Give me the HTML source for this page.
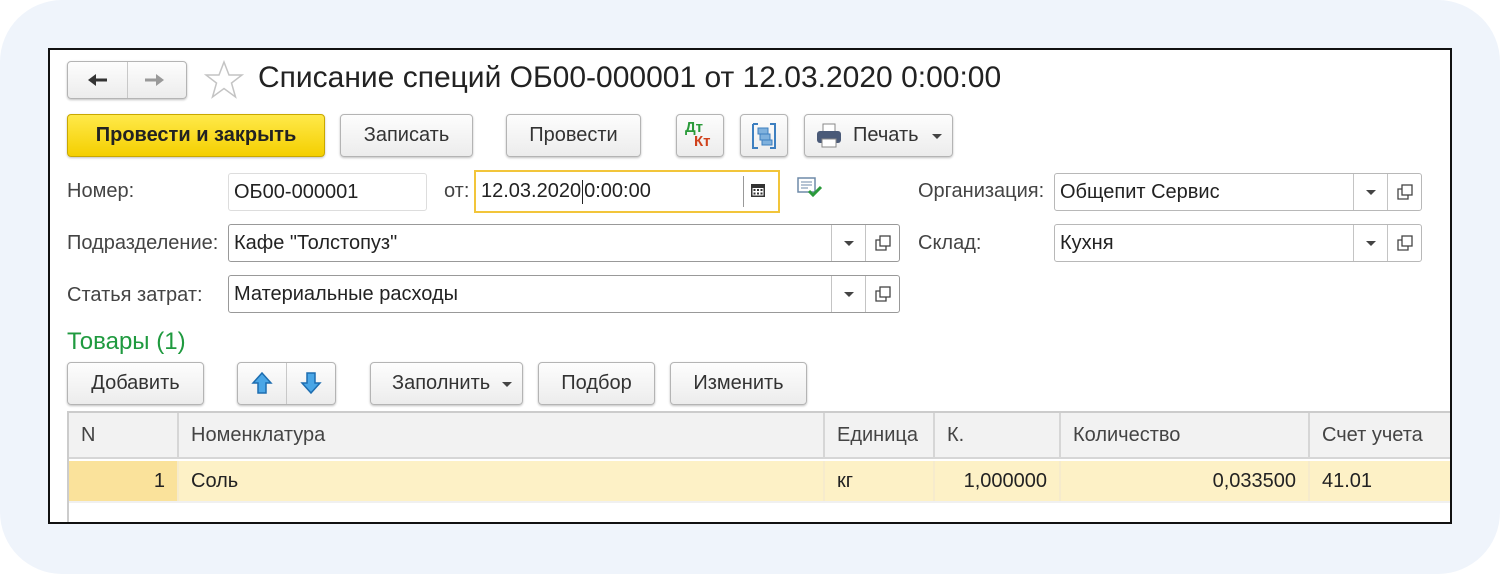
<!DOCTYPE html>
<html><head><meta charset="utf-8"><style>
*{box-sizing:border-box;margin:0;padding:0}
body{width:1500px;height:574px;background:#fff;font-family:"Liberation Sans",sans-serif;position:relative;overflow:hidden;color:#333}
.bg{position:absolute;left:0;top:0;width:1500px;height:574px;background:#eff4fb;border-radius:62px}
.panel{position:absolute;left:48px;top:48px;width:1404px;height:476px;background:#fff;border:2px solid #111;overflow:hidden}
.a{position:absolute}
.btn{position:absolute;border:1px solid #b4b4b4;border-radius:4px;background:linear-gradient(#fdfdfd,#ececec);box-shadow:0 1px 2px rgba(0,0,0,.25);font-size:20px;color:#333;display:flex;align-items:center;justify-content:center}
.lbl{position:absolute;font-size:20px;color:#444}
.fld{position:absolute;border:1px solid #b8b8b8;border-radius:3px;background:#fff;font-size:20px;color:#222;padding-left:5px;display:flex;align-items:center}
.dd{position:absolute;top:0;bottom:0;border-left:1px solid #c4c4c4}
.tri{position:absolute;width:0;height:0;border-left:5px solid transparent;border-right:5px solid transparent;border-top:5px solid #444}
.th{position:absolute;top:0;height:46px;background:#f2f2f2;border-right:2px solid #d6d6d6;border-bottom:2px solid #d6d6d6;font-size:20px;color:#444;padding-left:12px;display:flex;align-items:center}
.td{position:absolute;top:48px;height:40px;background:#fdf1c6;border-right:2px solid #f6ebcc;font-size:20px;color:#222;display:flex;align-items:center;padding:0 12px}
</style></head><body>
<div class="bg"></div>
<div class="panel">
<div style="position:absolute;left:-50px;top:-50px;width:1500px;height:574px">
<!-- nav -->
<div class="btn" style="left:67px;top:61px;width:120px;height:38px"></div>
<div class="a" style="left:127px;top:62px;width:1px;height:36px;background:#c8c8c8"></div>
<svg class="a" style="left:87px;top:72px" width="22" height="16"><path d="M3 8H20" stroke="#333" stroke-width="3"/><path d="M1 8L9 2V14Z" fill="#333"/></svg>
<svg class="a" style="left:143px;top:72px" width="22" height="16"><path d="M2 8H19" stroke="#999" stroke-width="3"/><path d="M21 8L13 2V14Z" fill="#999"/></svg>
<svg class="a" style="left:204px;top:60px" width="40" height="40"><path d="M20 2L25 15H38L27.5 23L31.5 37L20 28.5L8.5 37L12.5 23L2 15H15Z" fill="none" stroke="#c4c4c4" stroke-width="1.5"/></svg>
<div class="a" style="left:258px;top:61px;font-size:30px;color:#222">Списание специй ОБ00-000001 от 12.03.2020 0:00:00</div>
<!-- toolbar -->
<div class="btn" style="left:67px;top:114px;width:258px;height:43px;background:linear-gradient(#ffe94a,#f4cf00);border-color:#c9a800;font-weight:bold;color:#222">Провести и закрыть</div>
<div class="btn" style="left:340px;top:114px;width:133px;height:43px">Записать</div>
<div class="btn" style="left:506px;top:114px;width:135px;height:43px">Провести</div>
<div class="btn" style="left:676px;top:114px;width:48px;height:43px"></div>
<div class="a" style="left:685px;top:119px;font-size:15px;font-weight:bold;color:#2a9a3a">Дт</div>
<div class="a" style="left:694px;top:133px;font-size:15px;font-weight:bold;color:#d0421c">Кт</div>
<div class="btn" style="left:740px;top:114px;width:48px;height:43px"></div>
<svg class="a" style="left:750px;top:122px" width="28" height="28"><path d="M3 2H8M3 2V26H8M20 2H25V26H20" stroke="#3d7fc0" stroke-width="2" fill="none"/><rect x="8" y="6" width="10" height="6" fill="#7fb1dd" stroke="#3d7fc0"/><rect x="10" y="12" width="10" height="6" fill="#7fb1dd" stroke="#3d7fc0"/><rect x="12" y="18" width="10" height="5" fill="#7fb1dd" stroke="#3d7fc0"/></svg>
<div class="btn" style="left:804px;top:114px;width:149px;height:43px;justify-content:flex-start;padding-left:48px">Печать</div>
<svg class="a" style="left:815px;top:123px" width="28" height="26"><rect x="8" y="1" width="12" height="8" fill="#fff" stroke="#888"/><rect x="2" y="8" width="24" height="12" rx="3" fill="#4a5a78"/><rect x="7" y="16" width="14" height="8" fill="#fff" stroke="#888"/></svg>
<div class="tri" style="left:932px;top:134px"></div>
<!-- row1 -->
<div class="lbl" style="left:67px;top:180px">Номер:</div>
<div class="fld" style="left:228px;top:173px;width:199px;height:38px;border-color:#ddd">ОБ00-000001</div>
<div class="lbl" style="left:444px;top:180px">от:</div>
<div class="fld" style="left:474px;top:170px;width:306px;height:43px;border:2px solid #f2c53a;border-radius:0">12.03.2020<span style="display:inline-block;width:1px;height:24px;background:#222;margin:0 1px"></span>0:00:00<div class="dd" style="left:267px;top:4px;bottom:4px;border-color:#999"></div></div>
<svg class="a" style="left:750px;top:182px" width="16" height="16"><rect x="1" y="2" width="14" height="13" fill="#333"/><rect x="2.5" y="6" width="11" height="7.5" fill="#fff"/><g fill="#333"><rect x="3.5" y="7" width="2" height="2"/><rect x="7" y="7" width="2" height="2"/><rect x="10.5" y="7" width="2" height="2"/><rect x="3.5" y="10.5" width="2" height="2"/><rect x="7" y="10.5" width="2" height="2"/><rect x="10.5" y="10.5" width="2" height="2"/></g></svg>
<svg class="a" style="left:796px;top:176px" width="28" height="24"><rect x="2" y="2" width="17" height="14" fill="#fff" stroke="#6e8aa8" stroke-width="1.5"/><path d="M5 6H16M5 9H16M5 12H12" stroke="#6e8aa8"/><path d="M13 15L17 19L25 11" stroke="#2a9a3a" stroke-width="3" fill="none"/></svg>
<div class="lbl" style="left:918px;top:180px">Организация:</div>
<div class="fld" style="left:1054px;top:173px;width:368px;height:38px">Общепит Сервис<div class="dd" style="left:298px"></div><div class="dd" style="left:332px"></div><div class="tri" style="left:311px;top:16px"></div><svg class="a" style="left:342px;top:10px" width="16" height="16"><rect x="5" y="1" width="10" height="10" fill="#fff" stroke="#444" stroke-width="1.3"/><path d="M5 5H1V15H11V11" stroke="#444" stroke-width="1.3" fill="none"/></svg></div>
<!-- row2 -->
<div class="lbl" style="left:67px;top:232px">Подразделение:</div>
<div class="fld" style="left:228px;top:224px;width:672px;height:38px;border-color:#999">Кафе "Толстопуз"<div class="dd" style="left:602px"></div><div class="dd" style="left:636px"></div><div class="tri" style="left:615px;top:16px"></div><svg class="a" style="left:646px;top:10px" width="16" height="16"><rect x="5" y="1" width="10" height="10" fill="#fff" stroke="#444" stroke-width="1.3"/><path d="M5 5H1V15H11V11" stroke="#444" stroke-width="1.3" fill="none"/></svg></div>
<div class="lbl" style="left:918px;top:232px">Склад:</div>
<div class="fld" style="left:1054px;top:224px;width:368px;height:38px">Кухня<div class="dd" style="left:298px"></div><div class="dd" style="left:332px"></div><div class="tri" style="left:311px;top:16px"></div><svg class="a" style="left:342px;top:10px" width="16" height="16"><rect x="5" y="1" width="10" height="10" fill="#fff" stroke="#444" stroke-width="1.3"/><path d="M5 5H1V15H11V11" stroke="#444" stroke-width="1.3" fill="none"/></svg></div>
<!-- row3 -->
<div class="lbl" style="left:67px;top:284px">Статья затрат:</div>
<div class="fld" style="left:228px;top:275px;width:672px;height:38px;border-color:#999">Материальные расходы<div class="dd" style="left:602px"></div><div class="dd" style="left:636px"></div><div class="tri" style="left:615px;top:16px"></div><svg class="a" style="left:646px;top:10px" width="16" height="16"><rect x="5" y="1" width="10" height="10" fill="#fff" stroke="#444" stroke-width="1.3"/><path d="M5 5H1V15H11V11" stroke="#444" stroke-width="1.3" fill="none"/></svg></div>
<div class="a" style="left:67px;top:328px;font-size:24px;color:#1f9a3f">Товары (1)</div>
<!-- table toolbar -->
<div class="btn" style="left:67px;top:362px;width:137px;height:43px">Добавить</div>
<div class="btn" style="left:237px;top:362px;width:99px;height:43px"></div>
<div class="a" style="left:286px;top:363px;width:1px;height:41px;background:#c8c8c8"></div>
<svg class="a" style="left:251px;top:371px" width="22" height="24"><path d="M11 2L20 12H15V22H7V12H2Z" fill="#4aa6e6" stroke="#1d6db0" stroke-width="1.5"/></svg>
<svg class="a" style="left:300px;top:371px" width="22" height="24"><path d="M11 22L20 12H15V2H7V12H2Z" fill="#4aa6e6" stroke="#1d6db0" stroke-width="1.5"/></svg>
<div class="btn" style="left:370px;top:362px;width:153px;height:43px;justify-content:flex-start;padding-left:21px">Заполнить</div>
<div class="tri" style="left:502px;top:382px"></div>
<div class="btn" style="left:538px;top:362px;width:117px;height:43px">Подбор</div>
<div class="btn" style="left:670px;top:362px;width:137px;height:43px">Изменить</div>
<!-- table -->
<div class="a" style="left:67px;top:411px;width:1400px;height:120px;border-left:2px solid #ccc;border-top:2px solid #ccc;background:#fff">
<div class="th" style="left:0;width:110px">N</div>
<div class="th" style="left:110px;width:646px">Номенклатура</div>
<div class="th" style="left:756px;width:110px">Единица</div>
<div class="th" style="left:866px;width:126px">К.</div>
<div class="th" style="left:992px;width:249px">Количество</div>
<div class="th" style="left:1241px;width:160px">Счет учета</div>
<div class="td" style="left:0;width:110px;background:#fae29b;justify-content:flex-end">1</div>
<div class="td" style="left:110px;width:646px">Соль</div>
<div class="td" style="left:756px;width:110px">кг</div>
<div class="td" style="left:866px;width:126px;justify-content:flex-end">1,000000</div>
<div class="td" style="left:992px;width:249px;justify-content:flex-end">0,033500</div>
<div class="td" style="left:1241px;width:160px">41.01</div>
<div class="a" style="left:0;top:88px;width:1400px;height:2px;background:#f0f0f0"></div>
</div>
</div>
</div>
</body></html>
